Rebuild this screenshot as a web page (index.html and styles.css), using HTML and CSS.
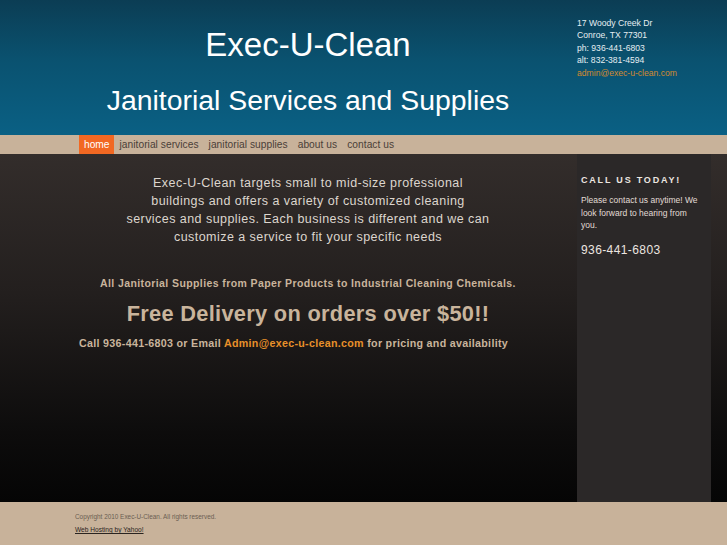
FILE: index.html
```html
<!DOCTYPE html>
<html lang="en">
<head>
<meta charset="utf-8">
<title>Exec-U-Clean</title>
<link rel="stylesheet" href="styles.css">
</head>
<body>
<header class="header">
  <div class="header-main">
    <h1 class="title">Exec-U-Clean</h1>
    <h2 class="subtitle">Janitorial Services and Supplies</h2>
  </div>
  <address class="contact">
    <span>17 Woody Creek Dr</span>
    <span>Conroe, TX 77301</span>
    <span>ph: 936-441-6803</span>
    <span>alt: 832-381-4594</span>
    <a class="contact-mail" href="#">admin@exec-u-clean.com</a>
  </address>
</header>
<nav class="nav">
  <a class="nav-item active" href="#">home</a>
  <a class="nav-item" href="#">janitorial services</a>
  <a class="nav-item" href="#">janitorial supplies</a>
  <a class="nav-item" href="#">about us</a>
  <a class="nav-item" href="#">contact us</a>
</nav>
<div class="page">
  <main class="content">
    <p class="intro">Exec-U-Clean targets small to mid-size professional<br>buildings and offers a variety of customized cleaning<br>services and supplies. Each business is different and we can<br>customize a service to fit your specific needs</p>
    <p class="supplies">All Janitorial Supplies from Paper Products to Industrial Cleaning Chemicals.</p>
    <p class="delivery">Free Delivery on orders over $50!!</p>
    <p class="call">Call 936-441-6803 or Email <a class="call-mail" href="#">Admin@exec-u-clean.com</a> for pricing and availability</p>
  </main>
  <aside class="sidebar">
    <h3 class="side-title">CALL US TODAY!</h3>
    <p class="side-text">Please contact us anytime! We look forward to hearing from you.</p>
    <p class="side-phone">936-441-6803</p>
  </aside>
</div>
<footer class="footer">
  <p class="copy">Copyright 2010 Exec-U-Clean. All rights reserved.</p>
  <a class="yahoo" href="#">Web Hosting by Yahoo!</a>
</footer>
</body>
</html>
```

FILE: styles.css
```css
* { box-sizing: border-box; }
html, body { margin: 0; padding: 0; }
body {
  font-family: "Liberation Sans", Arial, sans-serif;
  background: #050505;
  width: 727px;
  overflow: hidden;
}
a { text-decoration: none; }

.header {
  height: 135px;
  background: linear-gradient(to bottom, #0b3d54 0%, #0a5270 45%, #0a6084 100%);
  display: flex;
  padding-left: 79px;
}
.header-main {
  width: 458px;
  text-align: center;
  color: #fff;
}
.title {
  margin: 25px 0 0;
  font-size: 33px;
  line-height: 40px;
  font-weight: normal;
}
.subtitle {
  margin: 18px -40px 0;
  font-size: 28.4px;
  line-height: 34px;
  font-weight: normal;
  white-space: nowrap;
}
.contact {
  margin-left: 40px;
  padding-top: 16.5px;
  display: flex;
  flex-direction: column;
  font-style: normal;
  font-size: 8.6px;
  line-height: 12.6px;
  color: #e6eef2;
}
.contact-mail { color: #d28a30; }

.nav {
  height: 19px;
  background: #c8b29a;
  display: flex;
  padding-left: 79px;
}
.nav-item {
  padding: 0 5px;
  font-size: 10.2px;
  line-height: 19px;
  letter-spacing: 0.05px;
  color: #4a4038;
}
.nav-item.active {
  background: #f26822;
  color: #fff;
  letter-spacing: 0;
}

.page {
  display: flex;
  height: 348px;
  padding-left: 79px;
  background: linear-gradient(to bottom, #332d2b 0%, #231f1e 40%, #0d0c0c 80%, #050505 100%);
}
.content {
  width: 458px;
  text-align: center;
  padding-top: 20px;
}
.content p { margin: 0; }
.intro {
  font-size: 12.5px;
  line-height: 18px;
  letter-spacing: 0.45px;
  color: #ddd6ce;
  white-space: nowrap;
}
.supplies {
  margin-top: 29px !important;
  font-size: 10.5px;
  line-height: 16px;
  font-weight: bold;
  letter-spacing: 0.4px;
  color: #c9b49c;
  white-space: nowrap;
}
.delivery {
  margin-top: 9px !important;
  font-size: 21.8px;
  line-height: 28px;
  font-weight: bold;
  letter-spacing: 0.3px;
  color: #c9b49c;
}
.call {
  margin-top: 7px !important;
  text-align: left;
  font-size: 10.7px;
  line-height: 16px;
  font-weight: bold;
  letter-spacing: 0.3px;
  color: #c9b49c;
  white-space: nowrap;
}
.call-mail { color: #e8902a; }

.sidebar {
  margin-left: 40px;
  width: 134px;
  background: #2b2828;
  padding: 20px 4px 0;
}
.side-title {
  margin: 0;
  font-size: 9px;
  line-height: 12px;
  letter-spacing: 1.8px;
  color: #ece6e0;
}
.side-text {
  margin: 8px 0 0;
  font-size: 8.5px;
  line-height: 12.5px;
  color: #e2dcd6;
  width: 124px;
}
.side-phone {
  margin: 10px 0 0;
  font-size: 12px;
  line-height: 16px;
  letter-spacing: 0.4px;
  color: #ece6e0;
}

.footer {
  height: 43px;
  background: #c8b29a;
  padding: 9px 0 0 75px;
}
.copy {
  margin: 0;
  font-size: 6.4px;
  line-height: 12px;
  color: #6a5e52;
}
.yahoo {
  display: block;
  width: max-content;
  font-size: 6.6px;
  line-height: 14px;
  color: #2a2420;
  text-decoration: underline;
}
```
